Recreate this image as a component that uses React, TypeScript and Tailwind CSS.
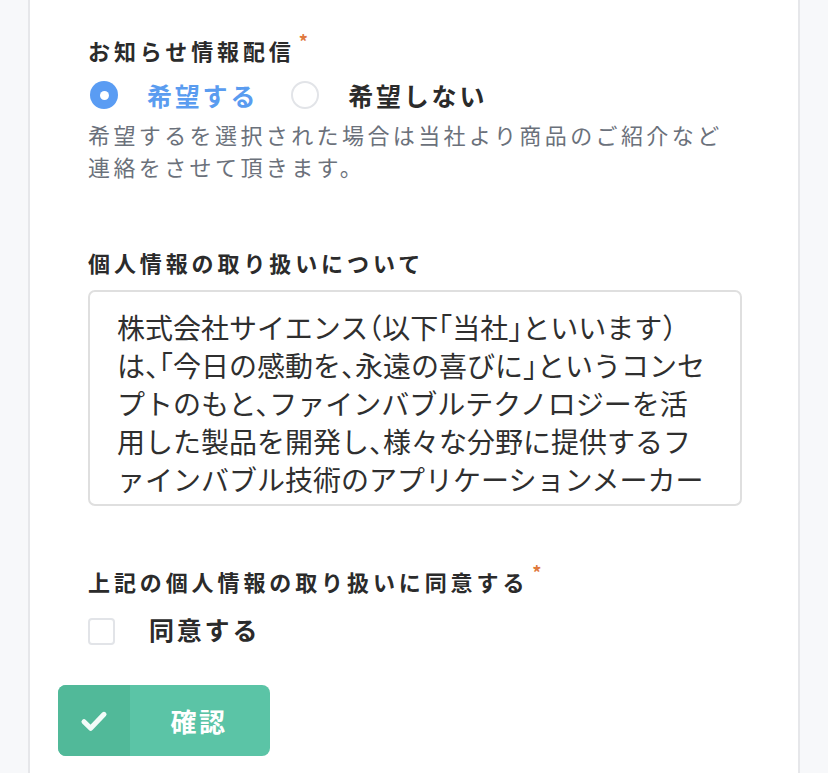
import { useState } from 'react';

const policyLines = [
  '株式会社サイエンス（以下「当社」といいます）',
  'は、「今日の感動を、永遠の喜びに」というコンセ',
  'プトのもと、ファインバブルテクノロジーを活',
  '用した製品を開発し、様々な分野に提供するフ',
  'ァインバブル技術のアプリケーションメーカー',
  'です。',
  '当社は、お客様の個人情報を適切に取り扱うことが',
  '重要な責務であると考えております。',
];

function Required() {
  return <span className="ml-[4px] mt-[-4px] text-[18px] leading-[18px] text-[#e0793d]">*</span>;
}

function FieldLabel({ children, required }: { children: string; required?: boolean }) {
  return (
    <div className="flex items-start text-[22px] font-bold leading-[28px] tracking-[3.9px] text-[#2b2b2b]">
      <span>{children}</span>
      {required ? <Required /> : null}
    </div>
  );
}

function Radio({ checked }: { checked: boolean }) {
  return checked ? (
    <span className="flex h-[28px] w-[28px] items-center justify-center rounded-full bg-[#5a9cf3]">
      <span className="h-[9px] w-[9px] rounded-full bg-white" />
    </span>
  ) : (
    <span className="h-[28px] w-[28px] rounded-full border-2 border-[#e2e4e8] bg-white" />
  );
}

export default function App() {
  const [wish, setWish] = useState<'yes' | 'no'>('yes');
  const [agree, setAgree] = useState(false);

  return (
    <div className="flex min-h-screen w-full bg-[#f7f8fa] font-['Noto_Sans_CJK_JP','Noto_Sans',sans-serif]">
      <div className="w-[28px] shrink-0" />
      <div className="flex w-[772px] shrink-0 flex-col border-x-2 border-[#e6e7ea] bg-white pt-[36px] pb-[17px]">
        <div className="ml-[58px] mr-[56px] flex flex-col">
          <FieldLabel required>お知らせ情報配信</FieldLabel>

          <div className="mt-[17px] flex h-[28px] items-center">
            <button type="button" onClick={() => setWish('yes')} className="ml-[2px] flex items-center">
              <Radio checked={wish === 'yes'} />
              <span
                className={`ml-[29px] text-[25px] font-bold leading-[28px] tracking-[2.8px] ${
                  wish === 'yes' ? 'text-[#5a9cf0]' : 'text-[#2b2b2b]'
                }`}
              >
                希望する
              </span>
            </button>
            <button type="button" onClick={() => setWish('no')} className="ml-[33px] flex items-center">
              <Radio checked={wish === 'no'} />
              <span
                className={`ml-[29px] text-[25px] font-bold leading-[28px] tracking-[2.8px] ${
                  wish === 'no' ? 'text-[#5a9cf0]' : 'text-[#2b2b2b]'
                }`}
              >
                希望しない
              </span>
            </button>
          </div>

          <p className="mt-[9px] text-[22px] leading-[32px] tracking-[3.4px] text-[#6b717b]">
            希望するを選択された場合は当社より商品のご紹介など連絡をさせて頂きます。
          </p>

          <div className="mt-[66px]">
            <FieldLabel>個人情報の取り扱いについて</FieldLabel>
          </div>

          <div className="mt-[14px] h-[216px] overflow-hidden rounded-[7px] border-2 border-[#dfdfdf] px-[27px] pt-[16px] text-[28px] leading-[38px] text-[#2f2f2f] [font-feature-settings:'halt']">
            {policyLines.map((line) => (
              <div key={line} className="whitespace-nowrap">
                {line}
              </div>
            ))}
          </div>

          <div className="mt-[61px]">
            <FieldLabel required>上記の個人情報の取り扱いに同意する</FieldLabel>
          </div>

          <button type="button" onClick={() => setAgree(!agree)} className="mt-[22px] flex h-[28px] items-center">
            <span
              className={`flex h-[27px] w-[27px] items-center justify-center rounded-[4px] border-2 ${
                agree ? 'border-[#5a9cf3] bg-[#5a9cf3]' : 'border-[#e2e4e8] bg-white'
              }`}
            >
              {agree ? (
                <svg viewBox="0 0 24 24" className="h-[18px] w-[18px]" fill="none" stroke="white" strokeWidth={3.5}>
                  <path d="M5 12.5l4.5 4.5L19 7.5" strokeLinecap="round" strokeLinejoin="round" />
                </svg>
              ) : null}
            </span>
            <span className="ml-[34px] mt-[-5px] text-[25px] font-bold leading-[28px] tracking-[2.8px] text-[#2b2b2b]">
              同意する
            </span>
          </button>
        </div>

        <button
          type="button"
          className="mt-[40px] ml-[28px] flex h-[71px] w-[212px] overflow-hidden rounded-[8px] bg-[#5bc4a6]"
        >
          <span className="flex h-full w-[72px] items-center justify-center bg-[#51b999]">
            <svg viewBox="0 0 24 24" className="h-[32px] w-[32px]" fill="none" stroke="#f2fbf8" strokeWidth={3.8}>
              <path d="M4.5 12.5l5 5L19.5 7" strokeLinecap="round" strokeLinejoin="round" />
            </svg>
          </span>
          <span className="flex flex-1 items-center justify-center pr-[2px] text-[26px] font-bold tracking-[2.5px] text-white">
            確認
          </span>
        </button>
      </div>
      <div className="w-[28px] shrink-0" />
    </div>
  );
}
